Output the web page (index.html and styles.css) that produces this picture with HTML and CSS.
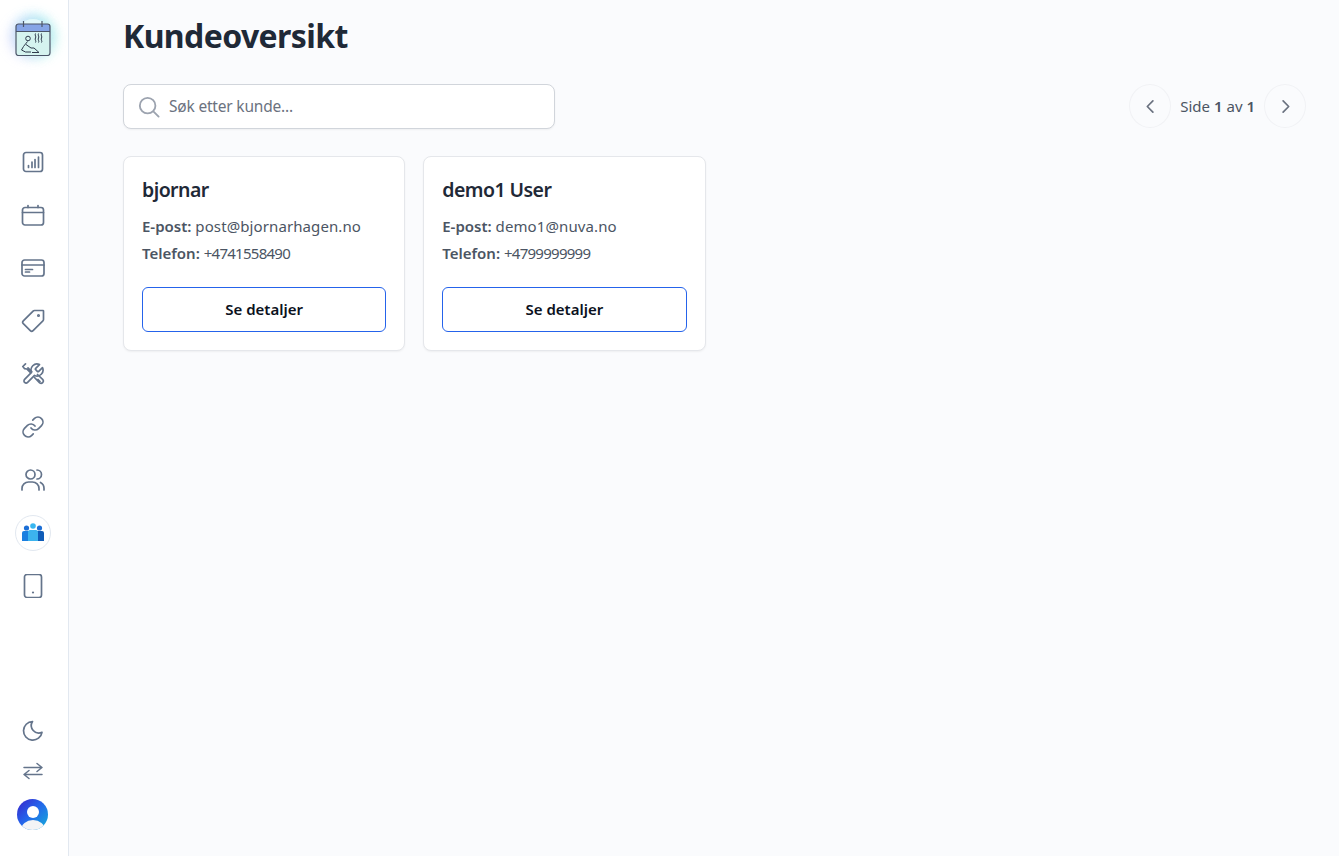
FILE: index.html
```html
<!DOCTYPE html>
<html lang="no">
<head>
<meta charset="utf-8">
<title>Kundeoversikt</title>
<link rel="stylesheet" href="styles.css">
</head>
<body>
<div class="app">
  <aside class="sidebar">
    <div class="logo">
      <svg width="36" height="36" viewBox="0 0 36 36" fill="none">
        <rect x="1" y="4" width="34" height="32" rx="2.500" fill="#d5f3ef"/>
        <path d="M1 11.500V6.500A2.500 2.500 0 0 1 3.500 4h29A2.500 2.500 0 0 1 35 6.500v5z" fill="#86a5e6"/>
        <rect x="1" y="4" width="34" height="31.500" rx="2.500" stroke="#4b5568" stroke-width="1.200"/>
        <path d="M1 11.500h34M8.500 1v6M27 1v6" stroke="#4b5568" stroke-width="1.200"/>
        <circle cx="13" cy="18.500" r="2.300" stroke="#2f3b4d" stroke-width="1"/>
        <path d="M12.500 21.500l-4 5-2 3.500 4 2h5.500M11 24.500l5 3.500h3l5 4.500h-7M20.500 13.500c-1.200 2 1.200 3 0 4.500s1.200 3 0 4.500M23.500 13.500c-1.200 2 1.200 3 0 4.500s1.200 3 0 4.500M26.500 13.500c-1.200 2 1.200 3 0 4.500s1.200 3 0 4.500" stroke="#2f3b4d" stroke-width="1"/>
      </svg>
    </div>
    <nav class="nav">
      <a class="nav-item"><svg class="icon" viewBox="0 0 24 24"><rect x="2.500" y="2.500" width="19" height="19" rx="2.500"/><path d="M7.500 17.500v-2M11 17.500V12M14 17.500V9.500M17.500 17.500V7"/></svg></a>
      <a class="nav-item"><svg class="icon" viewBox="0 0 24 24"><rect x="1.500" y="4.500" width="21" height="17.500" rx="2.500"/><path d="M1.500 9.500h21M7 2.500v2M17 2.500v2"/></svg></a>
      <a class="nav-item"><svg class="icon" viewBox="0 0 24 24"><rect x="1" y="4" width="22" height="16" rx="2.500"/><path d="M1 9h22M4.500 13.500h7M4.500 16h4"/></svg></a>
      <a class="nav-item"><svg class="icon" viewBox="0 0 24 24"><path d="M13.500 1.500H22a.5.5 0 0 1 .5.500v8.500a2 2 0 0 1-.6 1.400l-9.800 9.800a2 2 0 0 1-2.800 0L2.300 14.700a2 2 0 0 1 0-2.800l9.800-9.800a2 2 0 0 1 1.400-.6z"/><circle cx="17.500" cy="6.500" r=".7"/></svg></a>
      <a class="nav-item"><svg class="icon" viewBox="0 0 24 24"><path d="M14.700 6.300a1 1 0 0 0 0 1.400l1.600 1.600a1 1 0 0 0 1.400 0l3.770-3.770a6 6 0 0 1-7.940 7.940l-6.910 6.910a2.120 2.120 0 0 1-3-3l6.910-6.910a6 6 0 0 1 7.940-7.940l-3.760 3.760z"/><path d="M4.500 1.800L1.800 4.500l1.800 2.200 2.200.3 3.700 3.700M7 5.800l3.700 3.700M13.500 15.500l5.200 5.400a2.300 2.300 0 0 0 3.200-3.200l-5.400-5.200M17 17.500l2 2"/></svg></a>
      <a class="nav-item"><svg class="icon" viewBox="0 0 24 24"><path d="M10 13a5 5 0 0 0 7.540.54l3-3a5 5 0 0 0-7.070-7.070l-1.720 1.710"/><path d="M14 11a5 5 0 0 0-7.540-.54l-3 3a5 5 0 0 0 7.070 7.070l1.710-1.710"/></svg></a>
      <a class="nav-item"><svg class="icon" viewBox="0 0 24 24"><circle cx="9.500" cy="6.500" r="4.500"/><path d="M1 22v-1.500A6.500 6.500 0 0 1 7.500 14h4a6.500 6.500 0 0 1 6.500 6.500V22M16 2a4.500 4.500 0 0 1 0 9M19.500 14.500a6.500 6.500 0 0 1 3.500 5.800V22"/></svg></a>
      <a class="nav-item nav-active">
        <span class="active-ring">
          <svg width="22" height="20" viewBox="0 0 22 20">
            <circle cx="4.500" cy="5" r="2.600" fill="#1d6fd6"/><circle cx="17.500" cy="5" r="2.600" fill="#1d6fd6"/><circle cx="11" cy="3" r="2.800" fill="#38b6f0"/>
            <path d="M0 18V10a2 2 0 0 1 2-2h5v10z" fill="#1a7fe0"/><path d="M15 8h5a2 2 0 0 1 2 2v8h-7z" fill="#0f5cb8"/><path d="M6 9a2 2 0 0 1 2-2h6a2 2 0 0 1 2 2v9H6z" fill="#3cb4ee"/>
          </svg>
        </span>
      </a>
      <a class="nav-item"><svg class="icon" viewBox="0 0 24 24"><rect x="3.500" y="0.500" width="17" height="23" rx="2.500"/><path class="dot" d="M12 18.500h.01"/></svg></a>
    </nav>
    <div class="sidebar-foot">
      <a class="foot-item"><svg class="icon" viewBox="0 0 24 24"><path d="M11.500 2.500a9.300 9.300 0 1 0 9.500 10.800 7.500 7.500 0 0 1-9.500-10.800z"/></svg></a>
      <a class="foot-item"><svg class="icon icon-thin" viewBox="0 0 24 24"><path d="M3 8.500h18M16 4.500l5 4-5 4M21 15.500H3M8 11.500l-5 4 5 4"/></svg></a>
      <span class="avatar"><span class="avatar-head"></span><span class="avatar-body"></span></span>
    </div>
  </aside>
  <main class="main">
    <h1 class="title">Kundeoversikt</h1>
    <div class="toolbar">
      <label class="search">
        <svg class="search-icon" viewBox="0 0 24 24"><circle cx="10.500" cy="10.500" r="8.500"/><path d="M17 17l5.500 5.500"/></svg>
        <input class="search-input" type="text" placeholder="Søk etter kunde...">
      </label>
      <div class="pager">
        <button class="page-btn"><svg class="chev" viewBox="0 0 24 24"><path d="M15 5l-7 7 7 7"/></svg></button>
        <span class="page-text">Side <b>1</b> av <b>1</b></span>
        <button class="page-btn"><svg class="chev" viewBox="0 0 24 24"><path d="M9 5l7 7-7 7"/></svg></button>
      </div>
    </div>
    <section class="cards">
      <article class="card">
        <h2 class="card-name">bjornar</h2>
        <p class="card-line"><b>E-post:</b> <span class="email">post@bjornarhagen.no</span></p>
        <p class="card-line"><b>Telefon:</b> <span class="phone">+4741558490</span></p>
        <button class="card-btn">Se detaljer</button>
      </article>
      <article class="card">
        <h2 class="card-name">demo1 User</h2>
        <p class="card-line"><b>E-post:</b> <span class="email">demo1@nuva.no</span></p>
        <p class="card-line"><b>Telefon:</b> <span class="phone">+4799999999</span></p>
        <button class="card-btn">Se detaljer</button>
      </article>
    </section>
  </main>
</div>
</body>
</html>
```

FILE: styles.css
```css
* { box-sizing: border-box; }
html, body { margin: 0; height: 100%; }
body {
  background: #fafbfd;
  color: #1f2937;
  font-family: "Noto Sans", "Open Sans", sans-serif;
  overflow: hidden;
}
.app { display: flex; height: 856px; }
.sidebar {
  width: 69px;
  flex: none;
  background: #fff;
  border-right: 1px solid #e2e8f0;
  padding-right: 2px;
  display: flex;
  flex-direction: column;
  align-items: center;
}
.logo {
  margin-top: 19px;
  width: 36px;
  height: 38px;
  border-radius: 50%;
  display: flex;
  align-items: center;
  justify-content: center;
  background: rgba(170, 235, 240, .35);
  box-shadow: -5px 0 12px 1px rgba(190, 190, 250, .4), 5px 0 12px 1px rgba(130, 235, 220, .4), 0 -5px 12px 0 rgba(130, 225, 245, .4);
}
.nav {
  margin-top: 87px;
  display: flex;
  flex-direction: column;
  gap: 17px;
}
.nav-item {
  width: 36px;
  height: 36px;
  display: flex;
  align-items: center;
  justify-content: center;
}
.icon {
  width: 24px;
  height: 24px;
  fill: none;
  stroke: #64748b;
  stroke-width: 1.700;
  stroke-linecap: round;
  stroke-linejoin: round;
}
.icon-thin { stroke-width: 1.500; }
.dot { stroke-width: 2.200; }
.active-ring {
  width: 36px;
  height: 36px;
  border: 1px solid #e2e8f0;
  border-radius: 50%;
  display: flex;
  align-items: center;
  justify-content: center;
  background: #fff;
}
.sidebar-foot {
  margin-top: auto;
  margin-bottom: 26px;
  display: flex;
  flex-direction: column;
  align-items: center;
  gap: 16px;
}
.foot-item { width: 24px; height: 24px; display: block; }
.avatar {
  position: relative;
  width: 31px;
  height: 31px;
  margin-right: 1px;
  border-radius: 50%;
  overflow: hidden;
  display: block;
  background: linear-gradient(135deg, #3a22c9 0%, #2563eb 45%, #14b0d8 100%);
}
.avatar-head {
  position: absolute;
  left: 9.500px;
  top: 7px;
  width: 12px;
  height: 12px;
  border-radius: 50%;
  background: #fff;
}
.avatar-body {
  position: absolute;
  left: 3.500px;
  top: 21px;
  width: 24px;
  height: 20px;
  border-radius: 50%;
  background: #f3f4f6;
}
.main {
  flex: 1;
  min-width: 0;
  padding: 0 33px 0 54px;
}
.title {
  margin: 15px 0 0;
  font-size: 32px;
  line-height: 42px;
  font-weight: 700;
  letter-spacing: -.6px;
  color: #1f2937;
}
.toolbar {
  margin-top: 27px;
  display: flex;
  align-items: flex-start;
  justify-content: space-between;
}
.search {
  width: 432px;
  height: 45px;
  background: #fff;
  border: 1px solid #d1d5db;
  border-radius: 8px;
  display: flex;
  align-items: center;
  padding-left: 14px;
  gap: 7px;
  box-shadow: 0 1px 2px rgba(0, 0, 0, .05);
}
.search-icon {
  width: 22px;
  height: 22px;
  fill: none;
  stroke: #9ca3af;
  stroke-width: 2;
  stroke-linecap: round;
}
.search-input {
  flex: 1;
  min-width: 0;
  border: 0;
  outline: 0;
  background: none;
  padding: 0 2px 2px;
  font: 15.500px "Noto Sans", "Open Sans", sans-serif;
  letter-spacing: -.2px;
  color: #1f2937;
}
.search-input::placeholder { color: #6b7280; opacity: 1; }
.pager { display: flex; align-items: center; gap: 9px; }
.page-btn {
  width: 42px;
  height: 44px;
  padding: 0;
  border: 1px solid #f1f2f5;
  border-radius: 50%;
  background: #fafbfd;
  display: flex;
  align-items: center;
  justify-content: center;
}
.chev {
  width: 19px;
  height: 19px;
  fill: none;
  stroke: #6b7280;
  stroke-width: 2.200;
  stroke-linecap: round;
  stroke-linejoin: round;
}
.page-text { font-size: 15px; line-height: 20px; color: #4b5563; }
.page-text b { font-weight: 600; }
.cards {
  margin-top: 27px;
  display: grid;
  grid-template-columns: repeat(4, 1fr);
  gap: 18px;
}
.card {
  height: 195px;
  background: #fff;
  border: 1px solid #e5e7eb;
  border-radius: 8px;
  padding: 19px 18px 18px;
  display: flex;
  flex-direction: column;
  box-shadow: 0 1px 2px rgba(0, 0, 0, .05);
}
.card-name {
  margin: 0 0 9px;
  font-size: 19.500px;
  line-height: 28px;
  font-weight: 600;
  letter-spacing: -.55px;
  color: #1f2937;
}
.card-line {
  margin: 0;
  font-size: 15px;
  line-height: 27px;
  color: #4b5563;
}
.card-line b { font-weight: 600; }
.email { letter-spacing: .1px; }
.phone { letter-spacing: -.73px; }
.card-btn {
  margin-top: auto;
  height: 45px;
  padding: 0 0 2px;
  border: 1px solid #2563eb;
  border-radius: 6px;
  background: #fff;
  font: 600 15px "Noto Sans", "Open Sans", sans-serif;
  color: #0b1120;
}
```
